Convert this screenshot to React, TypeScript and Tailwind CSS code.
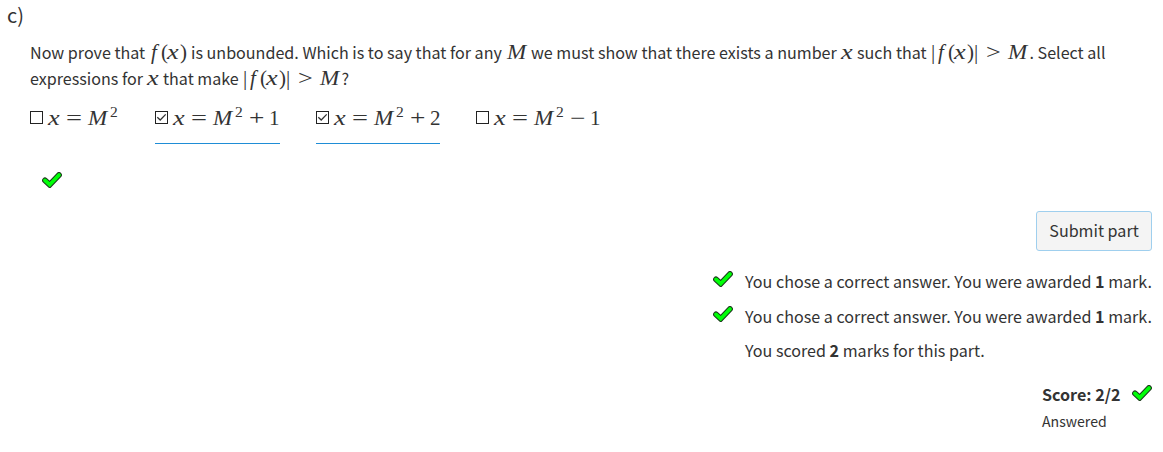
import type { ReactNode } from 'react';

function Check() {
  return (
    <svg viewBox="0 0 20 16" className="block h-4 w-5 shrink-0">
      <path
        d="M3 8.4 L7.7 12.7 L17 3"
        fill="none"
        stroke="#1c3a1c"
        strokeWidth="5.8"
        strokeLinecap="round"
        strokeLinejoin="miter"
      />
      <path d="M3 8.4 L7.7 12.7 L17 3" fill="none" stroke="#00ff08" strokeWidth="3.8" strokeLinecap="round" />
    </svg>
  );
}

function Box({ checked }: { checked?: boolean }) {
  return (
    <svg viewBox="0 0 13 13" className="mr-[5px] mt-[6px] block h-[13px] w-[13px] shrink-0 self-start">
      <rect x="0.5" y="0.5" width="12" height="12" fill="#fff" stroke="#222" />
      {checked && <path d="M2.3 6.2 L5.2 9 L10.7 3.4" fill="none" stroke="#333" strokeWidth="1.3" />}
    </svg>
  );
}

const serif = "font-['Liberation_Serif',serif] text-[21px]";

function Sym({ w, children, italic }: { w: string; children: ReactNode; italic?: boolean }) {
  return (
    <span className={`${serif} inline-block shrink-0 whitespace-nowrap ${italic ? 'italic' : ''} ${w}`}>{children}</span>
  );
}

function Txt({ w, children }: { w: string; children: ReactNode }) {
  return <span className={`inline-block shrink-0 whitespace-nowrap ${w}`}>{children}</span>;
}

function X({ w }: { w: string }) {
  return (
    <Sym w={w} italic>
      <span className="inline-block origin-left scale-x-125">x</span>
    </Sym>
  );
}

function Fx() {
  return (
    <>
      <Sym w="w-[12px] pl-[2px]" italic>f</Sym>
      <Sym w="w-[6px]">(</Sym>
      <X w="w-[13px]" />
      <Sym w="w-[7px]">)</Sym>
    </>
  );
}

function AbsFx() {
  return (
    <>
      <Sym w="w-[5px]">|</Sym>
      <Fx />
      <Sym w="w-[12px]">|</Sym>
      <Sym w="w-[22px]">
        <span className="inline-block origin-left scale-x-125">&gt;</span>
      </Sym>
      <M w="w-[21.5px]" />
    </>
  );
}

function M({ w }: { w: string }) {
  return (
    <Sym w={w} italic>
      <span className="inline-block origin-left scale-x-110">M</span>
    </Sym>
  );
}

function Choice({ w, checked, op, n }: { w: string; checked?: boolean; op?: string; n?: string }) {
  return (
    <div className={`flex h-[39px] items-baseline leading-[26px] ${w} ${checked ? 'border-b border-[#1f8dd6]' : ''}`}>
      <Box checked={checked} />
      <X w="w-[18px]" />
      <Sym w="w-[22px]">
        <span className="inline-block origin-left scale-x-135">=</span>
      </Sym>
      <M w="w-[22px]" />
      <span className="inline-block w-[14px] shrink-0 -translate-y-[8px] font-['Liberation_Serif',serif] text-[15.5px] leading-none">2</span>
      {op && (
        <>
          <Sym w="w-[20px]">
            <span className="inline-block origin-left scale-x-130">{op}</span>
          </Sym>
          <Sym w="w-[11px]">{n}</Sym>
        </>
      )}
    </div>
  );
}

function Feedback({ mark }: { mark?: boolean }) {
  return (
    <li className="flex h-[34.5px] w-[439px]">
      <span className="w-8 shrink-0">{mark && <Check />}</span>
      <span className="-mt-[3px] whitespace-nowrap leading-[26px]">
        {mark ? (
          <>You chose a correct answer. You were awarded <b>1</b> mark.</>
        ) : (
          <>You scored <b>2</b> marks for this part.</>
        )}
      </span>
    </li>
  );
}

export default function App() {
  return (
    <main className="h-[452px] w-[1163px] overflow-hidden bg-white font-['Noto_Sans_CJK_SC',sans-serif] text-[16.1px] text-[#333]">
      <h2 className="h-[39px] pl-[7px] pt-[2px] text-[20px] leading-[26px]">c)</h2>
      <section className="pl-[30px]">
        <p className="flex h-[26px] items-baseline leading-[26px]">
          <Txt w="w-[119px]">Now prove that</Txt>
          <Fx />
          <Txt w="w-[320px] pl-[4px]">is unbounded. Which is to say that for any</Txt>
          <M w="w-[24px]" />
          <Txt w="w-[310px]">we must show that there exists a number</Txt>
          <X w="w-[16px]" />
          <Txt w="w-[74px]">such that</Txt>
          <AbsFx />
          <Txt w="w-[80px]">. Select all</Txt>
        </p>
        <p className="flex h-[26px] items-baseline leading-[26px]">
          <Txt w="w-[117px]">expressions for</Txt>
          <X w="w-[16px]" />
          <Txt w="w-[80px]">that make</Txt>
          <AbsFx />
          <Txt w="w-[10px]">?</Txt>
        </p>
        <div className="mt-[14px] flex">
          <Choice w="w-[125px]" />
          <Choice w="w-[125px] mr-[36px]" checked op="+" n="1" />
          <Choice w="w-[124px] mr-[36px]" checked op="+" n="2" />
          <Choice w="w-[125px]" op="−" n="1" />
        </div>
        <div className="mt-[28px] pl-[11.5px]">
          <Check />
        </div>
      </section>
      <section className="flex flex-col items-end pr-[11px]">
        <button className="mt-[23px] h-[40px] w-[116px] rounded-[3px] border border-[#9fcfee] bg-[#f4f4f4] pb-[2px] text-[16.1px]">Submit part</button>
        <ul className="mt-[20px]">
          <Feedback mark />
          <Feedback mark />
          <Feedback />
        </ul>
        <div className="mt-[10.5px] flex w-[110px]">
          <b className="-mt-[4px] h-[26.5px] w-[90px] shrink-0 whitespace-nowrap leading-[26px]">Score: 2/2</b>
          <Check />
        </div>
        <div className="w-[110px] text-[14.1px] leading-[26px]">Answered</div>
      </section>
    </main>
  );
}
